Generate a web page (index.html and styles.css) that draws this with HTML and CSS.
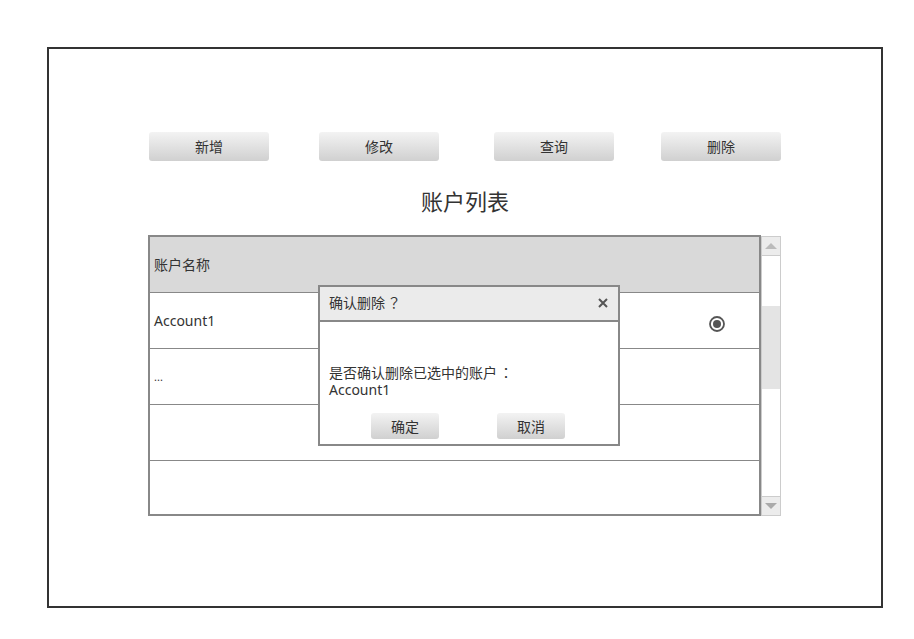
FILE: index.html
```html
<!DOCTYPE html>
<html lang="zh">
<head>
<meta charset="utf-8">
<title>账户列表</title>
<link rel="stylesheet" href="styles.css">
</head>
<body>
<div class="frame">
  <div class="toolbar">
    <div class="cell"><button class="btn">新增</button></div>
    <div class="cell"><button class="btn">修改</button></div>
    <div class="cell"><button class="btn">查询</button></div>
    <div class="cell"><button class="btn">删除</button></div>
  </div>
  <h1 class="title">账户列表</h1>
  <div class="grid-wrap">
    <div class="table">
      <div class="row head"><span class="cell-text">账户名称</span></div>
      <div class="row"><span class="cell-text">Account1</span>
        <svg class="radio" width="18" height="18" viewBox="0 0 18 18"><circle cx="9" cy="9" r="7" fill="#fff" stroke="#555" stroke-width="1.8"/><circle cx="9" cy="9" r="4" fill="#555"/></svg>
      </div>
      <div class="row"><span class="cell-text small">...</span></div>
      <div class="row"></div>
      <div class="row"></div>
    </div>
    <div class="scrollbar">
      <div class="arrow up"><svg width="12" height="7" viewBox="0 0 12 7"><polygon points="0,6 6,0 12,6" fill="#bbb"/></svg></div>
      <div class="track"><div class="thumb"></div></div>
      <div class="arrow down"><svg width="12" height="7" viewBox="0 0 12 7"><polygon points="0,0 12,0 6,6" fill="#aaa"/></svg></div>
    </div>
    <div class="dialog">
      <div class="dlg-head"><span class="dlg-title">确认删除<span class="cjk">？</span></span>
        <svg class="close" width="10" height="10" viewBox="0 0 10 10"><path d="M1 1 L9 9 M9 1 L1 9" stroke="#555" stroke-width="2"/></svg>
      </div>
      <div class="dlg-body">
        <p class="msg"><span class="line">是否确认删除已选中的账户<span class="cjk">：</span></span><span class="line">Account1</span></p>
        <div class="dlg-actions">
          <button class="btn small-btn">确定</button>
          <button class="btn small-btn">取消</button>
        </div>
      </div>
    </div>
  </div>
</div>
</body>
</html>
```
FILE: styles.css
```css
* { box-sizing: border-box; }
body {
  margin: 0;
  background: #fff;
  font-family: "Noto Sans", "Noto Sans CJK SC", sans-serif;
  color: #333;
}
.cjk {
  font-family: "Noto Sans CJK TC", "Noto Sans CJK JP", sans-serif;
  display: inline-block;
  width: 14px;
  text-align: center;
  margin-left: 2px;
}
.frame {
  margin: 47px 0 0 47px;
  width: 836px;
  height: 561px;
  border: 2px solid #333;
  padding: 83px 100px 0 100px;
}
.toolbar {
  display: grid;
  grid-template-columns: 170px 175px 167px 120px;
  height: 29px;
}
.btn {
  width: 120px;
  height: 29px;
  border: none;
  border-radius: 3px;
  background: linear-gradient(#f3f3f3, #d0d0d0);
  font-family: "Noto Sans", "Noto Sans CJK SC", sans-serif;
  font-size: 14px;
  color: #333;
  padding: 0 0 1px 0;
}
.title {
  margin: 25px 0 18px 0;
  font-size: 22px;
  font-weight: normal;
  line-height: 31px;
  text-align: center;
  color: #333;
}
.grid-wrap {
  position: relative;
  display: flex;
  margin-left: -1px;
}
.table {
  width: 614px;
  height: 281px;
  border: 2px solid #888;
  display: flex;
  flex-direction: column;
}
.row {
  height: 56px;
  border-top: 1px solid #888;
  display: flex;
  align-items: center;
  padding-left: 4px;
  position: relative;
  font-size: 14px;
}
.row.head {
  height: 55px;
  border-top: none;
  background: #d9d9d9;
}
.row:last-child { flex: 1; }
.cell-text { line-height: 18px; }
.cell-text.small { font-size: 11px; }
.radio {
  position: absolute;
  left: 558px;
  top: 22px;
}
.scrollbar {
  width: 20px;
  height: 280px;
  margin-top: 1px;
  border: 1px solid #ccc;
  display: flex;
  flex-direction: column;
  background: #fff;
}
.arrow {
  height: 19px;
  background: #ececec;
  display: flex;
  align-items: center;
  justify-content: center;
}
.arrow.up { border-bottom: 1px solid #ccc; }
.arrow.down { border-top: 1px solid #ccc; }
.track {
  flex: 1;
  padding-top: 50px;
}
.thumb {
  height: 83px;
  background: #e4e4e4;
}
.dialog {
  position: absolute;
  left: 170px;
  top: 50px;
  width: 302px;
  height: 161px;
  border: 2px solid #888;
  background: #fff;
  display: flex;
  flex-direction: column;
}
.dlg-head {
  height: 35px;
  background: #ebebeb;
  border-bottom: 2px solid #888;
  display: flex;
  align-items: center;
  justify-content: space-between;
  padding: 0 10px 2px 9px;
  font-size: 14px;
}
.dlg-title { line-height: 18px; }
.dlg-body {
  flex: 1;
  padding: 0 9px;
  display: flex;
  flex-direction: column;
}
.msg {
  margin: 42px 0 0 0;
  font-size: 14px;
}
.line {
  display: block;
  height: 17px;
  line-height: 17px;
}
.dlg-actions {
  margin-top: 15px;
  display: flex;
  padding-left: 42px;
  gap: 58px;
}
.small-btn {
  width: 68px;
  height: 26px;
}
```
